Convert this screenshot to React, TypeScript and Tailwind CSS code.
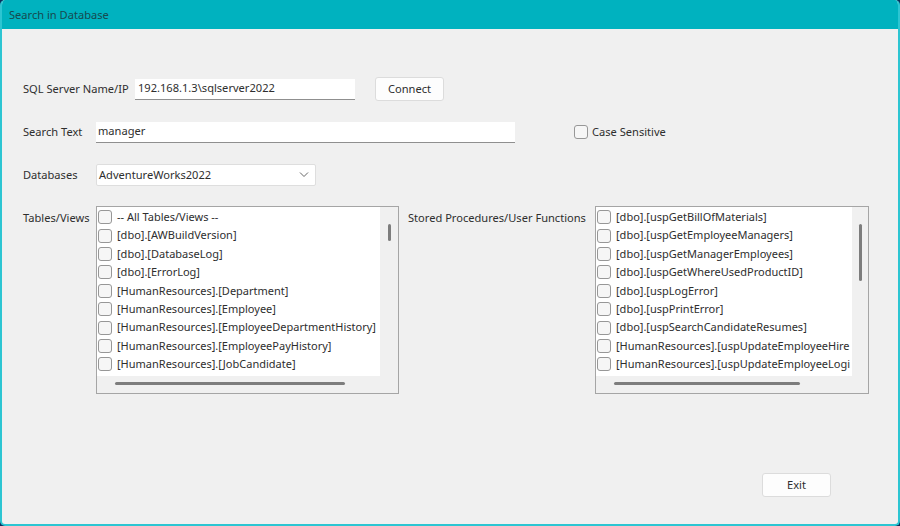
const tables = [
  "-- All Tables/Views --",
  "[dbo].[AWBuildVersion]",
  "[dbo].[DatabaseLog]",
  "[dbo].[ErrorLog]",
  "[HumanResources].[Department]",
  "[HumanResources].[Employee]",
  "[HumanResources].[EmployeeDepartmentHistory]",
  "[HumanResources].[EmployeePayHistory]",
  "[HumanResources].[JobCandidate]",
];

const procs = [
  "[dbo].[uspGetBillOfMaterials]",
  "[dbo].[uspGetEmployeeManagers]",
  "[dbo].[uspGetManagerEmployees]",
  "[dbo].[uspGetWhereUsedProductID]",
  "[dbo].[uspLogError]",
  "[dbo].[uspPrintError]",
  "[dbo].[uspSearchCandidateResumes]",
  "[HumanResources].[uspUpdateEmployeeHire",
  "[HumanResources].[uspUpdateEmployeeLogi",
];

function CheckBox() {
  return <span className="h-[14px] w-[14px] shrink-0 rounded-[3px] border border-[#979797] bg-[#f6f6f6]" />;
}

function CheckList({ items, className, white, vThumb, hWidth }: { items: string[]; className: string; white: string; vThumb: string; hWidth: string }) {
  return (
    <div className={`flex h-[188px] shrink-0 flex-col border border-[#a5a5a5] bg-[#f0f0f0] text-[11px] ${className}`}>
      <div className="flex h-[169px] shrink-0">
        <div className={`h-full shrink-0 overflow-hidden bg-white pt-[1px] pl-[1px] ${white}`}>
          {items.map((item) => (
            <div key={item} className="flex h-[18.4px] items-center gap-[5px] whitespace-nowrap">
              <CheckBox />
              <span>{item}</span>
            </div>
          ))}
        </div>
        <div className="flex-1 pt-[17px]">
          <div className={`mx-auto w-[3px] rounded-full bg-[#7d7d7d] ${vThumb}`} />
        </div>
      </div>
      <div className={`mt-[6px] ml-[18px] h-[3px] rounded-full bg-[#7d7d7d] ${hWidth}`} />
    </div>
  );
}

export default function App() {
  return (
    <div className="h-[526px] w-[900px] bg-[#0c2f5c]">
      <div className="flex h-full w-full flex-col overflow-hidden rounded-[5px] border-x-2 border-b-2 border-[#2cc5d2] bg-[#f0f0f0] font-['Noto_Sans','Open_Sans',sans-serif] text-[11.1px] whitespace-nowrap text-[#2e2e2e]">
        <div className="flex h-[29px] shrink-0 items-center bg-[#00b2bf] pt-[1px] pl-[7px] text-[#174a50]">Search in Database</div>

        <div className="mt-[47px] flex h-[26px] items-center pl-[21px]">
          <span className="w-[112px]">SQL Server Name/IP</span>
          <div className="flex h-[21px] w-[220px] items-center border-b border-[#8f8f8f] bg-white pl-[3px]">192.168.1.3\sqlserver2022</div>
          <button className="ml-[20px] h-[24px] w-[69px] rounded-[3px] border border-[#dcdcdc] bg-[#fdfdfd]">Connect</button>
        </div>

        <div className="mt-[17px] flex h-[26px] items-center pl-[21px]">
          <span className="w-[73px]">Search Text</span>
          <div className="flex h-[21px] w-[419px] items-center border-b border-[#8f8f8f] bg-white pl-[2px]">manager</div>
          <span className="ml-[59px] h-[14px] w-[14px] rounded-[3px] border border-[#979797] bg-[#f6f6f6]" />
          <span className="ml-[4px]">Case Sensitive</span>
        </div>

        <div className="mt-[17px] flex h-[26px] items-center pl-[21px]">
          <span className="w-[73px]">Databases</span>
          <div className="flex h-[22px] w-[220px] items-center justify-between rounded-[2px] border border-[#dedede] bg-white pr-[6px] pl-[2px]">
            <span>AdventureWorks2022</span>
            <svg width="10" height="6" viewBox="0 0 10 6" fill="none" stroke="#666" strokeWidth="1"><path d="M1 .5 5 4.5 9 .5" /></svg>
          </div>
        </div>

        <div className="mt-[18px] flex pl-[21px]">
          <span className="mt-[4px] w-[73px]">Tables/Views</span>
          <CheckList items={tables} className="w-[303px]" white="w-[283px]" vThumb="h-[17px]" hWidth="w-[230px]" />
          <span className="mt-[4px] ml-[9px] w-[187px]">Stored Procedures/User Functions</span>
          <CheckList items={procs} className="w-[274px]" white="w-[256px]" vThumb="h-[57px]" hWidth="w-[186px]" />
        </div>

        <div className="mt-[79px] flex justify-end pr-[67px]">
          <button className="h-[24px] w-[69px] rounded-[3px] border border-[#dcdcdc] bg-[#fdfdfd]">Exit</button>
        </div>
      </div>
    </div>
  );
}
